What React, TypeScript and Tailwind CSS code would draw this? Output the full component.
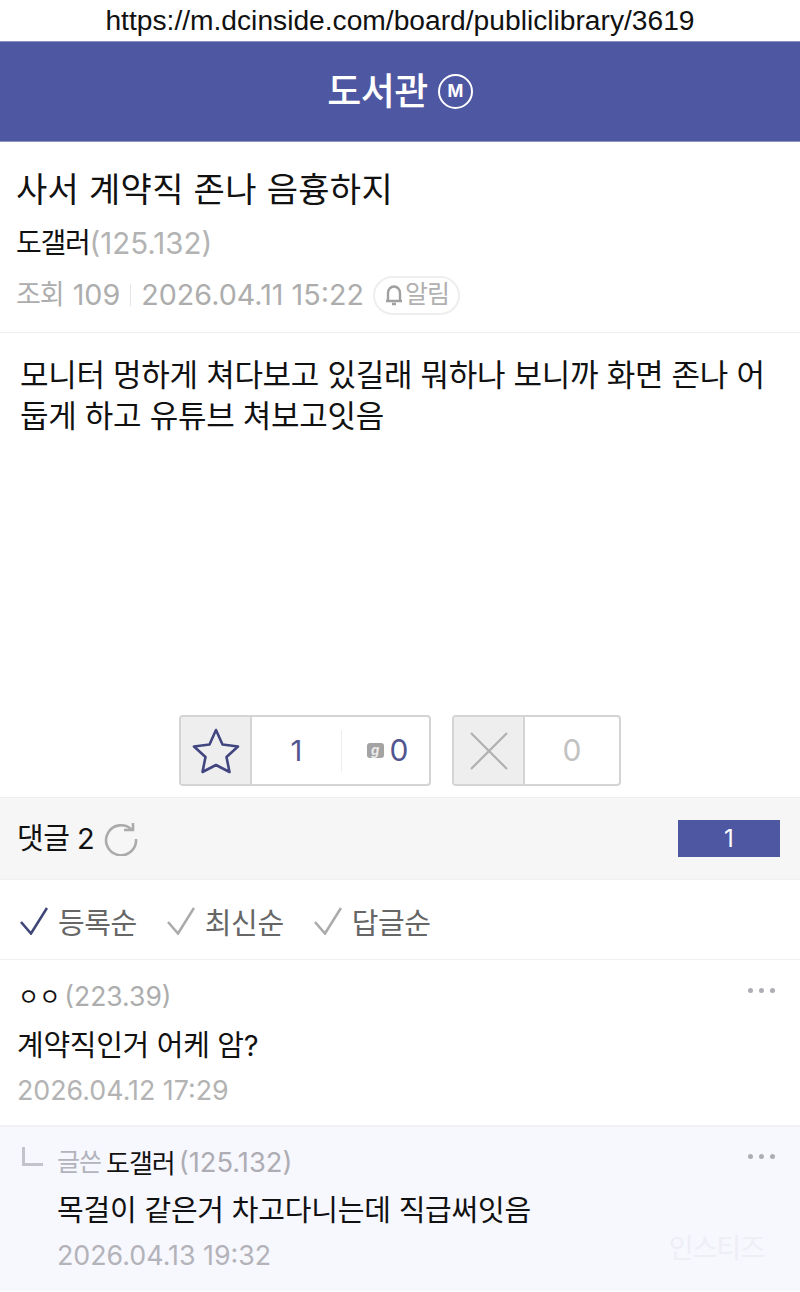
const kr = "font-['Inter','Noto_Sans_CJK_KR',sans-serif]";

function Check({ color }: { color: string }) {
  return (
    <svg width="28" height="28" viewBox="0 0 28 28" fill="none" className="shrink-0 mb-[5px]">
      <path d="M1 15 L11 26.5 L27 1" stroke={color} strokeWidth="2.6" />
    </svg>
  );
}

function Dots() {
  return (
    <div className="flex gap-[6px]">
      <span className="w-[5px] h-[5px] rounded-full bg-[#adadb3]" />
      <span className="w-[5px] h-[5px] rounded-full bg-[#adadb3]" />
      <span className="w-[5px] h-[5px] rounded-full bg-[#adadb3]" />
    </div>
  );
}

export default function App() {
  return (
    <div className={`${kr} w-[800px] h-[1292px] overflow-hidden bg-white relative`}>
      <div className="h-[41px] flex items-center justify-center font-['Liberation_Sans',sans-serif] text-[28.2px] text-[#111] leading-none">
        https://m.dcinside.com/board/publiclibrary/3619
      </div>
      <div className="h-[101px] bg-[#4e57a1] border-y border-[#8d93c0] flex items-center justify-center gap-[10px] text-white">
        <span className="text-[37px] font-medium tracking-[-0.5px]">도서관</span>
        <span className="w-[35px] h-[35px] rounded-full border-2 border-white flex items-center justify-center text-[17px] font-bold leading-none">
          M
        </span>
      </div>

      <div className="h-[191px] border-b border-[#eeeeee] pl-4 pt-[24px] flex flex-col">
        <div className="text-[34px] leading-[48px] text-[#111] tracking-[0.3px]">사서 계약직 존나 음흉하지</div>
        <div className="mt-[7px] h-[44px] flex items-center text-[29.5px]">
          <span className="text-[#111] text-[28px] tracking-[-1.3px]">도갤러</span>
          <span className="text-[#b3b3b3]">(125.132)</span>
        </div>
        <div className="mt-[10px] h-[40px] flex items-center text-[28.7px] text-[#adadad]">
          <span className="text-[27px] tracking-[-1px] mr-[9px]">조회</span>
          <span>109</span>
          <span className="mx-[10px] w-px h-[22px] bg-[#e5e5e5]" />
          <span>2026.04.11 15:22</span>
          <span className="ml-[9px] h-[39px] w-[87px] rounded-[20px] border-2 border-[#eeeeee] flex items-center justify-center gap-[1px] text-[25px] tracking-[-1px] text-[#b0b0b0]">
            <svg width="20" height="24" viewBox="0 0 20 24" fill="none" stroke="#a0a0a0" strokeWidth="2.4">
              <path d="M4 17 V10 a6 6.5 0 0 1 12 0 V17 M2 18 H18 M8 21 H12" />
            </svg>
            알림
          </span>
        </div>
      </div>

      <div className="h-[382px] pl-[20px] pr-[20px] pt-[21px] text-[31px] leading-[41px] text-[#111] tracking-[-0.3px] break-all">
        모니터 멍하게 쳐다보고 있길래 뭐하나 보니까 화면 존나 어둡게 하고 유튜브 쳐보고잇음
      </div>

      <div className="h-[82px] flex justify-center gap-[21px]">
        <div className="w-[252px] h-[71px] border-2 border-[#d4d4d4] rounded-[4px] flex overflow-hidden">
          <div className="w-[71px] bg-[#eeeeee] border-r-2 border-[#d4d4d4] flex items-center justify-center">
            <svg width="50" height="48" viewBox="0 0 50 48" fill="none" stroke="#414680" strokeWidth="2.6" strokeLinejoin="round">
              <path d="M25 3 L31.5 17.5 L47 19.5 L35.5 30 L38.5 45 L25 38 L11.5 45 L14.5 30 L3 19.5 L18.5 17.5 Z" />
            </svg>
          </div>
          <div className="w-[89px] flex items-center justify-center text-[29px] text-[#51568f]">1</div>
          <div className="w-px h-[42px] bg-[#eeeeee] self-center" />
          <div className="flex-1 flex items-center justify-center gap-[6px] text-[30px] text-[#51568f] pl-[4px]">
            <span className="w-[17px] h-[15px] bg-[#a3a3a3] rounded-[3px] flex items-center justify-center text-[#ececec] text-[13px] leading-none font-bold italic">
              g
            </span>
            0
          </div>
        </div>
        <div className="w-[169px] h-[71px] border-2 border-[#d4d4d4] rounded-[4px] flex overflow-hidden">
          <div className="w-[71px] bg-[#eeeeee] border-r-2 border-[#d4d4d4] flex items-center justify-center">
            <svg width="38" height="38" viewBox="0 0 38 38" fill="none" stroke="#b0b0b0" strokeWidth="2.2">
              <path d="M1 1 L37 37 M37 1 L1 37" />
            </svg>
          </div>
          <div className="flex-1 flex items-center justify-center text-[30px] text-[#c2c2c2]">0</div>
        </div>
      </div>

      <div className="h-[82px] bg-[#f6f6f6] border-t border-[#eeeeee] flex items-center justify-between pl-[17px] pr-[20px]">
        <div className="flex items-center gap-[10px] text-[29px] text-[#111] tracking-[-0.5px]">
          댓글 2
          <svg width="34" height="34" viewBox="0 0 34 34" fill="none" stroke="#ababab" strokeWidth="2.6">
            <path d="M28 8 A15 15 0 1 0 32 17" />
            <path d="M20 8 H29 V1" />
          </svg>
        </div>
        <div className="w-[102px] h-[37px] bg-[#4e57a1] flex items-center justify-center text-white text-[24px]">1</div>
      </div>

      <div className="h-[81px] border-y border-[#f0f0f0] flex items-center pl-[20px] pt-[8px] text-[29px] text-[#666] tracking-[-0.4px]">
        <div className="flex items-center gap-[10px]"><Check color="#3f4578" />등록순</div>
        <div className="flex items-center gap-[10px] ml-[30px]"><Check color="#ababab" />최신순</div>
        <div className="flex items-center gap-[10px] ml-[30px]"><Check color="#ababab" />답글순</div>
      </div>

      <div className="h-[165px] pl-[17px] pt-[17px] relative">
        <div className="absolute right-[25px] top-[28px]"><Dots /></div>
        <div className="flex items-center h-[40px] text-[26.5px]">
          <span className="text-[#111] text-[23px] ml-[1px] mr-[4px]">ㅇㅇ</span>
          <span className="text-[#adadad]">(223.39)</span>
        </div>
        <div className="mt-[9px] h-[40px] flex items-center text-[29px] text-[#111] tracking-[-0.3px]">계약직인거 어케 암?</div>
        <div className="mt-[4px] h-[40px] flex items-center text-[26.8px] text-[#b3b3b3]">2026.04.12 17:29</div>
      </div>

      <div className="h-[166px] bg-[#f7f7fe] border-t-2 border-[#f0f0f6] pl-[22px] pt-[16px] relative flex">
        <div className="absolute right-[25px] top-[27px]"><Dots /></div>
        <div className="absolute right-[36px] bottom-[22px] text-[27px] text-[#eeeef5] tracking-[-1px]">인스티즈</div>
        <div className="w-[21px] h-[19px] mt-[4px] border-l-[3px] border-b-[3px] border-[#c3c3cb] shrink-0" />
        <div className="ml-[14px]">
          <div className="flex items-center h-[40px] text-[26px]">
            <span className="text-[#b3b3bb] text-[25px] tracking-[-1px] mr-[5px]">글쓴</span>
            <span className="text-[#111] tracking-[-1px] mr-[4px]">도갤러</span>
            <span className="text-[#adadb3] text-[27.3px]">(125.132)</span>
          </div>
          <div className="mt-[8px] h-[40px] flex items-center text-[29px] text-[#111] tracking-[-0.2px]">목걸이 같은거 차고다니는데 직급써잇음</div>
          <div className="mt-[4px] h-[40px] flex items-center text-[26.8px] text-[#b3b3b9]">2026.04.13 19:32</div>
        </div>
      </div>
    </div>
  );
}
